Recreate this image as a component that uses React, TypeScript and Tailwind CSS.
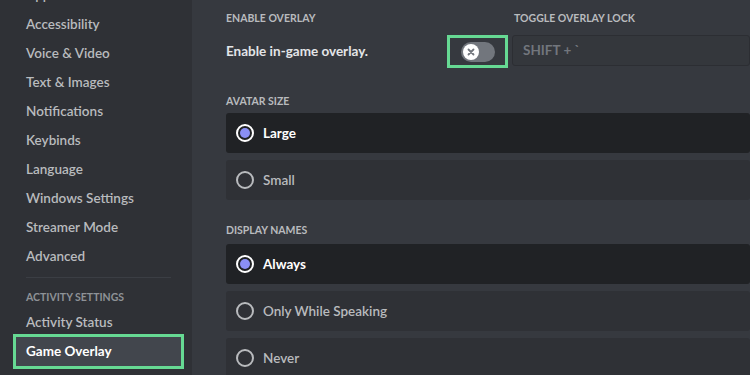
import React from 'react';

const sidebarItems = [
  'Appearance',
  'Accessibility',
  'Voice & Video',
  'Text & Images',
  'Notifications',
  'Keybinds',
  'Language',
  'Windows Settings',
  'Streamer Mode',
  'Advanced',
];

function Radio({ checked }: { checked: boolean }) {
  if (checked) {
    return (
      <div className="w-[18px] h-[18px] rounded-full border-2 border-white flex items-center justify-center">
        <div className="w-[10px] h-[10px] rounded-full bg-[#8a8ff5]" />
      </div>
    );
  }
  return <div className="w-[18px] h-[18px] rounded-full border-2 border-[#b9bbbe]" />;
}

function RadioRow({ label, checked }: { label: string; checked?: boolean }) {
  return (
    <div
      className={`h-10 flex items-center pl-[10px] gap-[9px] rounded-[3px] ${
        checked ? 'bg-[#202225]' : 'bg-[#2f3136]'
      }`}
    >
      <Radio checked={!!checked} />
      <span
        className={`text-[13.5px] ${checked ? 'text-white font-bold' : 'text-[#b9bbbe] font-semibold'}`}
      >
        {label}
      </span>
    </div>
  );
}

function Heading({ children }: { children: React.ReactNode }) {
  return (
    <div className="text-[10.5px] font-bold uppercase text-[#b9bbbe] leading-4">
      {children}
    </div>
  );
}

export default function App() {
  return (
    <div
      className="w-[750px] h-[375px] overflow-hidden flex bg-[#36393f]"
      style={{ fontFamily: 'Lato, "Noto Sans", sans-serif' }}
    >
      {/* Sidebar */}
      <div className="w-[192px] shrink-0 bg-[#2f3136] pl-4 pr-[11px]">
        <div className="-mt-[19px]">
          {sidebarItems.map((item) => (
            <div
              key={item}
              className="h-[29px] flex items-center px-[10px] text-[13.5px] font-semibold text-[#b9bbbe]"
            >
              {item}
            </div>
          ))}
        </div>
        <div className="mx-[10px] mt-[6px] h-px bg-[#3b3e44]" />
        <div className="px-[10px] mt-[12px] h-4 flex items-center text-[10.5px] font-bold uppercase text-[#8e9297]">
          Activity Settings
        </div>
        <div className="h-[29px] mt-[2px] flex items-center px-[10px] text-[13.5px] font-semibold text-[#b9bbbe]">
          Activity Status
        </div>
        <div className="h-[29px] flex items-center px-[10px] text-[13.5px] font-bold text-white bg-[#42464d] ring-[3px] ring-[#66d993]">
          Game Overlay
        </div>
      </div>

      {/* Main */}
      <div className="flex-1 pl-[34px] pt-[10px]">
        <div className="flex">
          <div className="w-[288px] shrink-0">
            <Heading>Enable Overlay</Heading>
            <div className="mt-[9px] flex items-center">
              <span className="text-[13.5px] font-bold text-[#e3e5e8] w-[221px]">Enable in-game overlay.</span>
              <div className="w-[61px] h-[33px] border-[3px] border-[#66d993] flex items-center justify-center">
                <div className="w-[34px] h-[20px] rounded-full bg-[#72767d] flex items-center pl-[2px]">
                  <div className="w-[16px] h-[16px] rounded-full bg-white flex items-center justify-center">
                    <svg width="8" height="8" viewBox="0 0 8 8">
                      <path d="M1.5 1.5 L6.5 6.5 M6.5 1.5 L1.5 6.5" stroke="#72767d" strokeWidth="1.8" strokeLinecap="round" />
                    </svg>
                  </div>
                </div>
              </div>
            </div>
          </div>
          <div className="flex-1">
            <Heading>Toggle Overlay Lock</Heading>
            <div className="mt-[9px] -ml-[2px] h-[31px] rounded-[3px] bg-[#34373c] border border-[#2c2e33] flex items-center pl-[10px] text-[13.5px] font-bold text-[#72767d]">
              SHIFT + `
            </div>
          </div>
        </div>

        <div className="mt-[25px]">
          <Heading>Avatar Size</Heading>
          <div className="mt-[4px] flex flex-col gap-[7px]">
            <RadioRow label="Large" checked />
            <RadioRow label="Small" />
          </div>
        </div>

        <div className="mt-[22px]">
          <Heading>Display Names</Heading>
          <div className="mt-[6px] flex flex-col gap-[7px]">
            <RadioRow label="Always" checked />
            <RadioRow label="Only While Speaking" />
            <RadioRow label="Never" />
          </div>
        </div>
      </div>
    </div>
  );
}
